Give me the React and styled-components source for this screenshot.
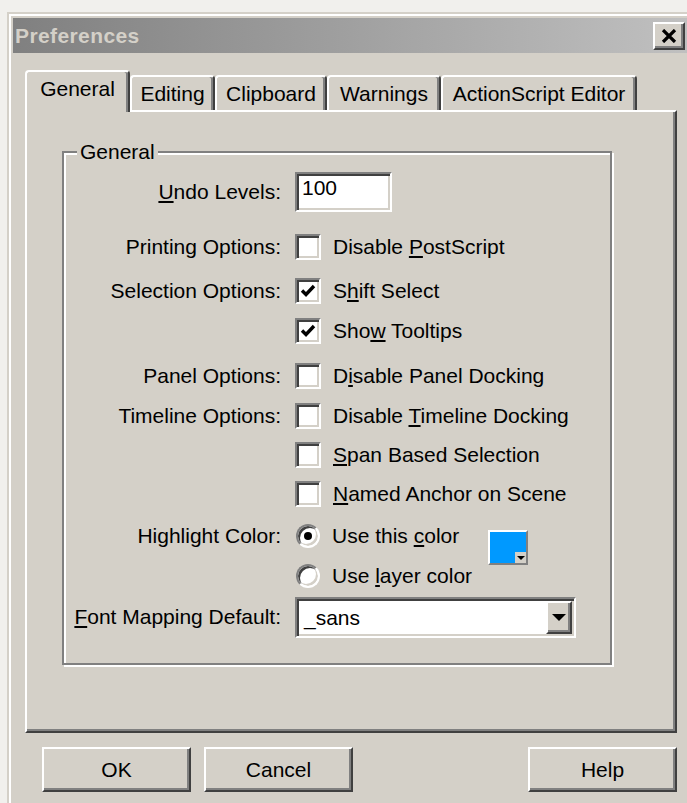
import React from 'react';
import styled, { createGlobalStyle, css } from 'styled-components';

const FACE = '#d4d0c8';
const LIGHT = '#ffffff';
const SHADOW = '#808080';
const DARK = '#404040';
const FONT = `"Liberation Sans", Arial, "DejaVu Sans", sans-serif`;

const GlobalStyle = createGlobalStyle`
  html, body { margin: 0; padding: 0; }
  body {
    background: #f1f0ed;
    overflow: hidden;
    font-family: ${FONT};
    font-size: 21px;
    color: #000;
  }
  #root { width: 687px; height: 803px; overflow: hidden; }
`;

const raised = css`
  border-style: solid;
  border-width: 2px;
  border-color: ${LIGHT} ${DARK} ${DARK} ${LIGHT};
  box-shadow: inset -2px -2px 0 ${SHADOW};
`;

const sunken = css`
  border-style: solid;
  border-width: 2px;
  border-color: ${SHADOW} ${LIGHT} ${LIGHT} ${SHADOW};
  box-shadow: inset 2px 2px 0 ${DARK}, inset -2px -2px 0 ${FACE};
`;

const Window = styled.div`
  box-sizing: border-box;
  margin: 12px 0 0 7px;
  width: 688px;
  height: 830px;
  padding: 6px;
  background: ${FACE};
  box-shadow: inset 0 0 0 2px ${FACE}, inset 0 0 0 4px ${LIGHT};
`;

const TitleBar = styled.div`
  height: 35px;
  display: flex;
  align-items: center;
  justify-content: space-between;
  padding: 0 4px 0 2px;
  background: linear-gradient(to right, #808080, #c0c0c0);
`;

const Title = styled.span`
  color: ${FACE};
  font-weight: bold;
  font-size: 21px;
  letter-spacing: 0.4px;
`;

const CloseButton = styled.button`
  box-sizing: border-box;
  width: 32px;
  height: 28px;
  padding: 0;
  background: ${FACE};
  ${raised};
  display: flex;
  align-items: center;
  justify-content: center;
`;

const Client = styled.div`
  padding: 17px 12px 0 12px;
`;

const TabRow = styled.div`
  display: flex;
  align-items: flex-end;
  height: 40px;
`;

const Tab = styled.div`
  box-sizing: border-box;
  width: ${p => p.$w}px;
  height: ${p => (p.$active ? 42 : 35)}px;
  display: flex;
  align-items: center;
  justify-content: center;
  background: ${FACE};
  border-top: 2px solid ${LIGHT};
  border-left: 2px solid ${LIGHT};
  border-right: 2px solid ${DARK};
  box-shadow: inset -2px 0 0 ${SHADOW};
  border-radius: 4px 4px 0 0;
  white-space: nowrap;
  ${p =>
    p.$active &&
    css`
      position: relative;
      z-index: 1;
      margin-bottom: -2px;
      padding-bottom: 6px;
    `}
`;

const Panel = styled.div`
  box-sizing: border-box;
  height: 623px;
  padding: 28px 0 0 35px;
  border: 2px solid;
  border-color: ${LIGHT} ${DARK} ${DARK} ${LIGHT};
  box-shadow: inset -2px -2px 0 ${SHADOW};
  background: ${FACE};
`;

const Group = styled.fieldset`
  box-sizing: border-box;
  width: 550px;
  min-inline-size: auto;
  margin: 0;
  padding: 8px 0 25px 10px;
  border: 2px solid ${SHADOW};
  box-shadow: inset 2px 2px 0 ${LIGHT}, 2px 2px 0 ${LIGHT};
`;

const Legend = styled.legend`
  margin-left: 3px;
  padding: 0 3px;
  line-height: 24px;
  background: ${FACE};
`;

const Row = styled.div`
  display: grid;
  grid-template-columns: 207px auto;
  column-gap: 14px;
  align-items: start;
  margin-top: ${p => p.$mt || 0}px;
`;

const Label = styled.div`
  text-align: right;
  line-height: 40px;
  white-space: nowrap;
`;

const Controls = styled.div`
  display: flex;
  align-items: flex-start;
`;

const Stack = styled.div`
  display: flex;
  flex-direction: column;
  width: ${p => (p.$w ? `${p.$w}px` : 'auto')};
`;

const Line = styled.div`
  display: flex;
  align-items: center;
  gap: 12px;
  height: ${p => p.$h || 40}px;
  white-space: nowrap;
`;

const Key = styled.u`
  text-decoration-thickness: 2px;
  text-underline-offset: 2px;
`;

const TextField = styled.input`
  box-sizing: border-box;
  width: 97px;
  height: 40px;
  margin: 0;
  padding: 0 5px 8px;
  ${sunken};
  background: #fff;
  font-family: ${FONT};
  font-size: 21px;
  color: #000;
  outline: none;
`;

const CheckBox = styled.span`
  box-sizing: border-box;
  flex: none;
  width: 26px;
  height: 26px;
  background: #fff;
  ${sunken};
  display: flex;
  align-items: center;
  justify-content: center;
`;

const RadioDot = styled.span`
  box-sizing: border-box;
  flex: none;
  width: 24px;
  height: 24px;
  margin-left: 1px;
  border-radius: 50%;
  background: #fff;
  border: 2px solid;
  border-color: ${SHADOW} ${LIGHT} ${LIGHT} ${SHADOW};
  box-shadow: inset 2px 2px 0 ${DARK}, inset -2px -2px 0 ${FACE};
  display: flex;
  align-items: center;
  justify-content: center;
  &::after {
    content: '';
    width: 8px;
    height: 8px;
    border-radius: 50%;
    background: ${p => (p.$on ? '#000' : 'transparent')};
  }
`;

const Swatch = styled.button`
  box-sizing: border-box;
  width: 40px;
  height: 35px;
  margin-top: 14px;
  padding: 0;
  background: ${FACE};
  border: 2px solid;
  border-color: ${LIGHT} ${SHADOW} ${SHADOW} ${LIGHT};
  display: flex;
  align-items: stretch;
  justify-content: stretch;
  svg { display: block; width: 100%; height: 100%; }
`;

const Combo = styled.div`
  box-sizing: border-box;
  width: 281px;
  height: 41px;
  padding: 0 2px 0 7px;
  background: #fff;
  ${sunken};
  display: flex;
  align-items: center;
  justify-content: space-between;
`;

const ComboButton = styled.span`
  box-sizing: border-box;
  width: 26px;
  height: 33px;
  background: ${FACE};
  ${raised};
  display: flex;
  align-items: center;
  justify-content: center;
`;

const ButtonRow = styled.div`
  display: flex;
  gap: 13px;
  margin-top: 14px;
  padding-left: 17px;
`;

const PushButton = styled.button`
  box-sizing: border-box;
  width: 149px;
  height: 45px;
  padding: 0;
  background: ${FACE};
  ${raised};
  font-family: ${FONT};
  font-size: 21px;
  color: #000;
  ${p => p.$push && 'margin-left: auto;'}
`;

const CloseGlyph = () => (
  <svg width="16" height="14" viewBox="0 0 16 14">
    <path d="M2 1 L14 13 M14 1 L2 13" stroke="#000" strokeWidth="3.2" fill="none" />
  </svg>
);

const CheckGlyph = () => (
  <svg width="16" height="16" viewBox="0 0 16 16">
    <path d="M2 7.5 L6 11.5 L14 3" stroke="#000" strokeWidth="3.4" fill="none" />
  </svg>
);

const DownArrow = ({ w = 14, h = 7 }) => (
  <svg width={w} height={h} viewBox={`0 0 ${w} ${h}`}>
    <polygon points={`0,0 ${w},0 ${w / 2},${h}`} fill="#000" />
  </svg>
);

const Check = ({ on, children }) => (
  <>
    <CheckBox>{on && <CheckGlyph />}</CheckBox>
    <span>{children}</span>
  </>
);

const tabs = [
  { name: 'General', w: 105 },
  { name: 'Editing', w: 85 },
  { name: 'Clipboard', w: 112 },
  { name: 'Warnings', w: 114 },
  { name: 'ActionScript Editor', w: 196 },
];

export default function App() {
  return (
    <>
      <GlobalStyle />
      <Window>
        <TitleBar>
          <Title>Preferences</Title>
          <CloseButton aria-label="Close">
            <CloseGlyph />
          </CloseButton>
        </TitleBar>
        <Client>
          <TabRow>
            {tabs.map((t, i) => (
              <Tab key={t.name} $w={t.w} $active={i === 0}>
                {t.name}
              </Tab>
            ))}
          </TabRow>
          <Panel>
            <Group>
              <Legend>General</Legend>

              <Row>
                <Label>
                  <Key>U</Key>ndo Levels:
                </Label>
                <Controls>
                  <TextField defaultValue="100" />
                </Controls>
              </Row>

              <Row $mt={15}>
                <Label>Printing Options:</Label>
                <Stack>
                  <Line>
                    <Check>
                      Disable <Key>P</Key>ostScript
                    </Check>
                  </Line>
                </Stack>
              </Row>

              <Row $mt={4}>
                <Label>Selection Options:</Label>
                <Stack>
                  <Line>
                    <Check on>
                      S<Key>h</Key>ift Select
                    </Check>
                  </Line>
                  <Line>
                    <Check on>
                      Sho<Key>w</Key> Tooltips
                    </Check>
                  </Line>
                </Stack>
              </Row>

              <Row $mt={5}>
                <Label>Panel Options:</Label>
                <Stack>
                  <Line>
                    <Check>
                      D<Key>i</Key>sable Panel Docking
                    </Check>
                  </Line>
                </Stack>
              </Row>

              <Row>
                <Label style={{ lineHeight: '39px' }}>Timeline Options:</Label>
                <Stack>
                  <Line $h={39}>
                    <Check>
                      Disable <Key>T</Key>imeline Docking
                    </Check>
                  </Line>
                  <Line $h={39}>
                    <Check>
                      <Key>S</Key>pan Based Selection
                    </Check>
                  </Line>
                  <Line $h={39}>
                    <Check>
                      <Key>N</Key>amed Anchor on Scene
                    </Check>
                  </Line>
                </Stack>
              </Row>

              <Row $mt={3}>
                <Label>Highlight Color:</Label>
                <Controls>
                  <Stack $w={193}>
                    <Line $h={40}>
                      <RadioDot $on />
                      <span>
                        Use this <Key>c</Key>olor
                      </span>
                    </Line>
                    <Line $h={40}>
                      <RadioDot />
                      <span>
                        Use <Key>l</Key>ayer color
                      </span>
                    </Line>
                  </Stack>
                  <Swatch aria-label="Highlight color">
                    <svg viewBox="0 0 36 31" preserveAspectRatio="none">
                      <polygon points="0,0 36,0 36,20 25,20 25,31 0,31" fill="#0099ff" />
                      <polygon points="27,24 35,24 31,28" fill="#000" />
                    </svg>
                  </Swatch>
                </Controls>
              </Row>

              <Row $mt={1}>
                <Label>
                  <Key>F</Key>ont Mapping Default:
                </Label>
                <Combo>
                  <span>_sans</span>
                  <ComboButton>
                    <DownArrow />
                  </ComboButton>
                </Combo>
              </Row>
            </Group>
          </Panel>
          <ButtonRow>
            <PushButton>OK</PushButton>
            <PushButton>Cancel</PushButton>
            <PushButton $push>Help</PushButton>
          </ButtonRow>
        </Client>
      </Window>
    </>
  );
}
